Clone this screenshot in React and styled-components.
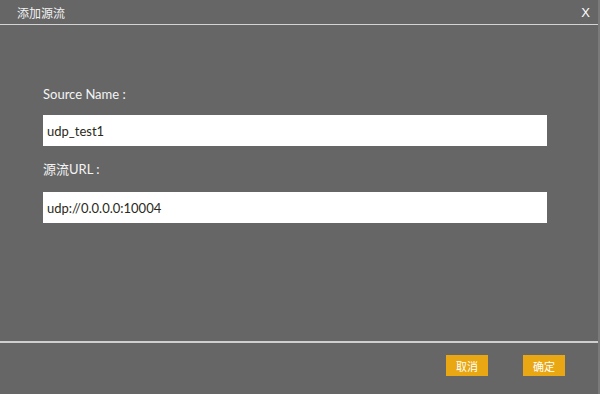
import React from "react";
import styled, { createGlobalStyle } from "styled-components";

const Global = createGlobalStyle`
  html, body { margin: 0; padding: 0; background: #666666; }
  body { font-family: Lato, "Noto Sans CJK SC", "Noto Sans", sans-serif; }
`;

const Dialog = styled.div`
  width: 600px;
  height: 394px;
  box-sizing: border-box;
  background: #666666;
  border-right: 2px solid #7a7a7a;
  display: flex;
  flex-direction: column;
`;

const Header = styled.div`
  height: 25px;
  box-sizing: border-box;
  border-bottom: 1px solid #d4d4d4;
  display: flex;
  align-items: center;
  justify-content: space-between;
  padding: 1px 8px 0 17px;
  color: #f2f2f2;
  font-family: "Noto Sans CJK SC", sans-serif;
  font-size: 12px;
`;

const Close = styled.span`
  font-family: "Liberation Sans", Arial, sans-serif;
  font-size: 13px;
  color: #ffffff;
`;

const Body = styled.div`
  flex: 1;
  padding: 61px 51px 0 43px;
  display: flex;
  flex-direction: column;
`;

const Label = styled.div`
  font-size: 13px;
  line-height: 16px;
  color: #f4f4f4;
  margin-top: ${(p) => p.$mt || 0}px;
  margin-bottom: ${(p) => p.$mb || 0}px;
`;

const Input = styled.input`
  box-sizing: border-box;
  width: 504px;
  height: 31px;
  border: none;
  outline: none;
  background: #ffffff;
  padding: 0 4px;
  font-family: Lato, "Noto Sans CJK SC", sans-serif;
  font-size: 13px;
  color: #2a2a1a;
`;

const Footer = styled.div`
  height: 53px;
  box-sizing: border-box;
  border-top: 2px solid #cfcfcf;
  display: flex;
  justify-content: flex-end;
  align-items: flex-start;
  gap: 35px;
  padding: 12px 33px 0 0;
`;

const Button = styled.button`
  width: 42px;
  height: 21px;
  border: none;
  padding: 0;
  background: #e8a713;
  color: #ffffff;
  font-family: "Noto Sans CJK SC", sans-serif;
  font-size: 11px;
  cursor: pointer;
`;

export default function App() {
  return (
    <>
      <Global />
      <Dialog>
        <Header>
          <span>添加源流</span>
          <Close>X</Close>
        </Header>
        <Body>
          <Label $mb={13}>Source Name :</Label>
          <Input defaultValue="udp_test1" />
          <Label $mt={15} $mb={15}>源流URL :</Label>
          <Input defaultValue="udp://0.0.0.0:10004" />
        </Body>
        <Footer>
          <Button>取消</Button>
          <Button>确定</Button>
        </Footer>
      </Dialog>
    </>
  );
}
